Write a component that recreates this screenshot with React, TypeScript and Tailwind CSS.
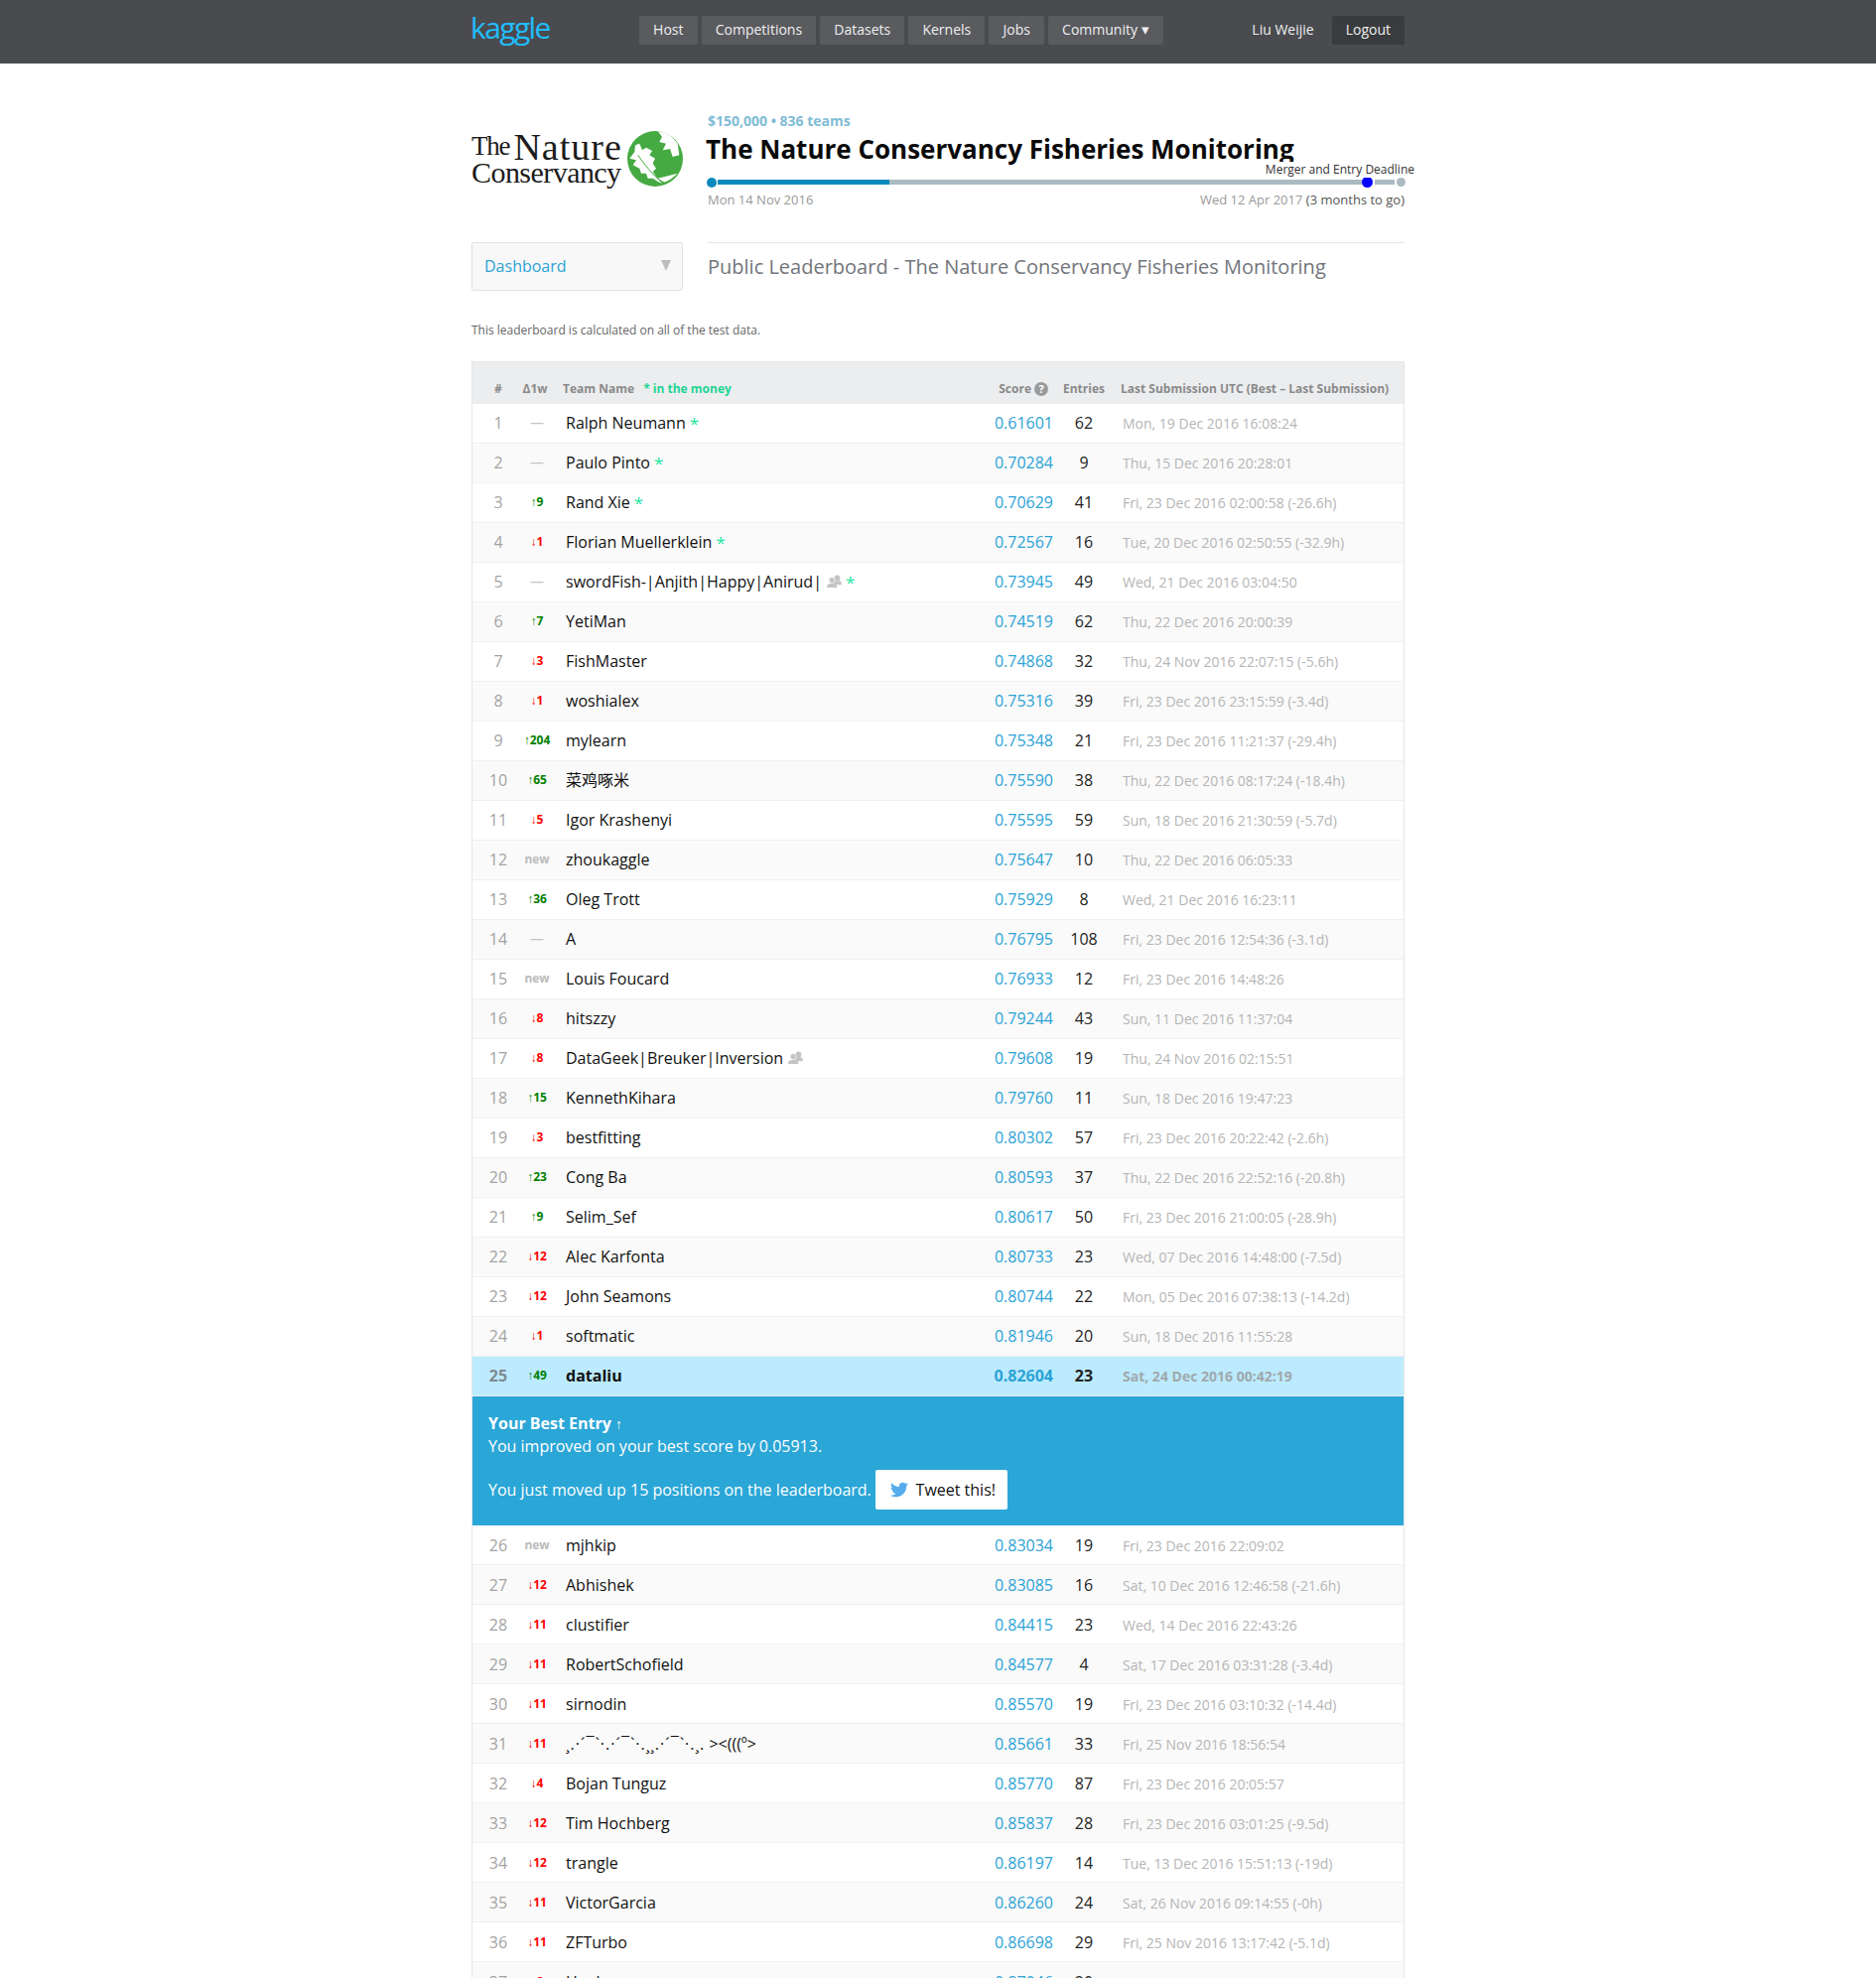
import React from "react";
import { FaTwitter } from "react-icons/fa";

type Row = [number, number | "new" | "-", string, string, number, string, number?];

const WAVE = "¸.·´¯`·.·´¯`·.¸¸.·´¯`·.¸.";

const rows: Row[] = [
  [1, "-", "Ralph Neumann", "0.61601", 62, "Mon, 19 Dec 2016 16:08:24", 1],
  [2, "-", "Paulo Pinto", "0.70284", 9, "Thu, 15 Dec 2016 20:28:01", 1],
  [3, 9, "Rand Xie", "0.70629", 41, "Fri, 23 Dec 2016 02:00:58 (-26.6h)", 1],
  [4, -1, "Florian Muellerklein", "0.72567", 16, "Tue, 20 Dec 2016 02:50:55 (-32.9h)", 1],
  [5, "-", "swordFish-|Anjith|Happy|Anirud|", "0.73945", 49, "Wed, 21 Dec 2016 03:04:50", 3],
  [6, 7, "YetiMan", "0.74519", 62, "Thu, 22 Dec 2016 20:00:39"],
  [7, -3, "FishMaster", "0.74868", 32, "Thu, 24 Nov 2016 22:07:15 (-5.6h)"],
  [8, -1, "woshialex", "0.75316", 39, "Fri, 23 Dec 2016 23:15:59 (-3.4d)"],
  [9, 204, "mylearn", "0.75348", 21, "Fri, 23 Dec 2016 11:21:37 (-29.4h)"],
  [10, 65, "菜鸡啄米", "0.75590", 38, "Thu, 22 Dec 2016 08:17:24 (-18.4h)"],
  [11, -5, "Igor Krashenyi", "0.75595", 59, "Sun, 18 Dec 2016 21:30:59 (-5.7d)"],
  [12, "new", "zhoukaggle", "0.75647", 10, "Thu, 22 Dec 2016 06:05:33"],
  [13, 36, "Oleg Trott", "0.75929", 8, "Wed, 21 Dec 2016 16:23:11"],
  [14, "-", "A", "0.76795", 108, "Fri, 23 Dec 2016 12:54:36 (-3.1d)"],
  [15, "new", "Louis Foucard", "0.76933", 12, "Fri, 23 Dec 2016 14:48:26"],
  [16, -8, "hitszzy", "0.79244", 43, "Sun, 11 Dec 2016 11:37:04"],
  [17, -8, "DataGeek|Breuker|Inversion", "0.79608", 19, "Thu, 24 Nov 2016 02:15:51", 2],
  [18, 15, "KennethKihara", "0.79760", 11, "Sun, 18 Dec 2016 19:47:23"],
  [19, -3, "bestfitting", "0.80302", 57, "Fri, 23 Dec 2016 20:22:42 (-2.6h)"],
  [20, 23, "Cong Ba", "0.80593", 37, "Thu, 22 Dec 2016 22:52:16 (-20.8h)"],
  [21, 9, "Selim_Sef", "0.80617", 50, "Fri, 23 Dec 2016 21:00:05 (-28.9h)"],
  [22, -12, "Alec Karfonta", "0.80733", 23, "Wed, 07 Dec 2016 14:48:00 (-7.5d)"],
  [23, -12, "John Seamons", "0.80744", 22, "Mon, 05 Dec 2016 07:38:13 (-14.2d)"],
  [24, -1, "softmatic", "0.81946", 20, "Sun, 18 Dec 2016 11:55:28"],
  [25, 49, "dataliu", "0.82604", 23, "Sat, 24 Dec 2016 00:42:19"],
  [26, "new", "mjhkip", "0.83034", 19, "Fri, 23 Dec 2016 22:09:02"],
  [27, -12, "Abhishek", "0.83085", 16, "Sat, 10 Dec 2016 12:46:58 (-21.6h)"],
  [28, -11, "clustifier", "0.84415", 23, "Wed, 14 Dec 2016 22:43:26"],
  [29, -11, "RobertSchofield", "0.84577", 4, "Sat, 17 Dec 2016 03:31:28 (-3.4d)"],
  [30, -11, "sirnodin", "0.85570", 19, "Fri, 23 Dec 2016 03:10:32 (-14.4d)"],
  [31, -11, WAVE, "0.85661", 33, "Fri, 25 Nov 2016 18:56:54"],
  [32, -4, "Bojan Tunguz", "0.85770", 87, "Fri, 23 Dec 2016 20:05:57"],
  [33, -12, "Tim Hochberg", "0.85837", 28, "Fri, 23 Dec 2016 03:01:25 (-9.5d)"],
  [34, -12, "trangle", "0.86197", 14, "Tue, 13 Dec 2016 15:51:13 (-19d)"],
  [35, -11, "VictorGarcia", "0.86260", 24, "Sat, 26 Nov 2016 09:14:55 (-0h)"],
  [36, -11, "ZFTurbo", "0.86698", 29, "Fri, 25 Nov 2016 13:17:42 (-5.1d)"],
  [37, -2, "Hank", "0.87046", 20, "Fri, 23 Dec 2016 10:41:17"],
];

function TeamIcon() {
  return (
    <svg width="15" height="14" viewBox="0 0 15 14" className="inline-block ml-[5px] -mt-[3px] align-middle" fill="#c4c4c4">
      <circle cx="10.5" cy="3.4" r="2.9" />
      <path d="M6.5 8.5c0-1.600 1.600-2.400 4-2.400s4.300.8 4.300 2.400v1.700H9z" />
      <circle cx="5.2" cy="5.6" r="3" fill="#c4c4c4" stroke="#fff" strokeWidth="0.6" />
      <path d="M0 13c0-3 1.600-4.300 5.200-4.300S10.500 10 10.500 13z" />
    </svg>
  );
}

function Delta({ v }: { v: Row[1] }) {
  if (v === "-") return <span className="text-[#c4c4c4] text-[14px]">—</span>;
  if (v === "new") return <span className="text-[#bbbbbb] font-bold text-[12px]">new</span>;
  const up = (v as number) > 0;
  return (
    <span className={up ? "text-[#008000] font-bold text-[12px]" : "text-[#ff0000] font-bold text-[12px]"}>
      <span className="font-normal text-[12px] font-['Liberation_Sans',sans-serif]">{up ? "↑" : "↓"}</span>
      {Math.abs(v as number)}
    </span>
  );
}

function TableRow({ r, i }: { r: Row; i: number }) {
  const me = r[0] === 25;
  const after = r[0] > 25;
  const bg = me ? "bg-[#bcebff]" : i % 2 === 0 ? "bg-white" : "bg-[#fafafa]";
  return (
    <div className={`flex items-center h-[40px] border-b border-[#f0f0f0] ${after ? "pt-[1px]" : "pb-[1px]"} ${bg} ${me ? "font-bold" : ""}`}>
      <div className="w-[52px] text-center text-[16px] text-[#a3a3a3]">{me ? <span className="text-[#808a90]">{r[0]}</span> : r[0]}</div>
      <div className="w-[26px] flex justify-center whitespace-nowrap leading-none">
        <Delta v={r[1]} />
      </div>
      <div className="flex-1 pl-[16px] text-[16px] text-[#111111] whitespace-nowrap">
        {r[2] === WAVE ? (
          <>
            <span className="tracking-[1px]">{WAVE}</span> {"><(((º>"}
          </>
        ) : (
          r[2]
        )}
        {r[6] === 2 || r[6] === 3 ? <TeamIcon /> : null}
        {r[6] === 1 || r[6] === 3 ? <span className="text-[#19e59d] ml-[4px] text-[17px] leading-none align-[-1px]">*</span> : null}
      </div>
      <div className="w-[121px] text-right text-[16px] text-[#2ba3d6]">{r[3]}</div>
      <div className="w-[62px] text-center text-[16px] text-[#222222]">{r[4]}</div>
      <div className={`w-[291px] pl-[8px] text-[14px] whitespace-nowrap ${after ? "" : "pt-[1px]"} ${me ? "text-[#a0a8ac]" : "text-[#b5b5b5]"}`}>{r[5]}</div>
    </div>
  );
}

function Globe() {
  return (
    <svg width="56" height="56" viewBox="0 0 56 56" className="shrink-0">
      <defs>
        <clipPath id="globe-clip">
          <circle cx="28" cy="28" r="28" />
        </clipPath>
      </defs>
      <circle cx="28" cy="28" r="28" fill="#46aa42" />
      <g clipPath="url(#globe-clip)" fill="#fff">
        <path d="M8 14.300L12.300 12.700 15 19.300 19 16.700 25 20 22.300 24.300 28 27.700 25.700 32.700 29 37.700 25.700 41 29 46 35 52.700 30.700 51 25.700 47.700 20.700 47.700 19 42.700 14 42.700 12.300 37.700 5.700 34.300 9 29.300 2.300 27.700 7.300 21z" />
        <path d="M30.700 0L40.700 .7 50.700 12.700 52.300 24.300 45.700 26 43 18 35.700 19.300 39 12.700 32.300 11 35 6z" />
        <path d="M30.700 47.700L50.700 42.700C46 47 42 50 37.300 51.500z" />
      </g>
      <path fill="none" stroke="#46aa42" strokeWidth="1" d="M10.700 24.300C17 33 25 44 34 51" />
    </svg>
  );
}

export default function App() {
  return (
    <div className="h-[1993px] overflow-hidden bg-white font-['Open_Sans','Noto_Sans_CJK_SC',sans-serif]">
      <header className="h-[64px] bg-[#4a4b4f]">
        <div className="w-[940px] mx-auto flex items-start h-full">
          <div className="w-[169px] h-[64px] flex items-center text-[30px] font-medium leading-none text-[#20beff] tracking-[-1.6px] -mt-[4px] -ml-[1px] mr-[1px]">kaggle</div>
          <nav className="flex gap-[4px] mt-[16px] text-[14px] text-[#f0f0f0]">
            {["Host", "Competitions", "Datasets", "Kernels", "Jobs"].map((t) => (
              <div key={t} className="h-[29px] leading-[28px] px-[14.12px] bg-[#5a5b5f] rounded-[2px] whitespace-nowrap">{t}</div>
            ))}
            <div className="h-[29px] leading-[28px] px-[14.12px] bg-[#5a5b5f] rounded-[2px] whitespace-nowrap">
              Community <span className="text-[15px] leading-none">▾</span>
            </div>
          </nav>
          <div className="ml-auto flex items-start mt-[16px] text-[14px] leading-[28px] text-[#f0f0f0]">
            <span className="mr-[18px]">Liu Weijie</span>
            <div className="h-[29px] px-[14px] bg-[#3a3b3f] rounded-[2px]">Logout</div>
          </div>
        </div>
      </header>

      <main className="w-[940px] mx-auto">
        <section className="flex pt-[48px]">
          <div className="w-[238px] pt-[20px] flex items-start gap-[5px]">
            <div className="w-[152px] text-[#1c1c1c] font-['Liberation_Serif',serif] whitespace-nowrap pt-[1px]">
              <div className="flex items-baseline h-[31px] leading-[31px]">
                <span className="text-[27px] tracking-[-1.2px] -translate-y-[5px]">The</span>
                <span className="text-[38px] tracking-[1px] ml-[4px]">Nature</span>
              </div>
              <div className="text-[30px] leading-[20px] tracking-[-0.55px]">Conservancy</div>
            </div>
            <Globe />
          </div>
          <div className="w-[702px]">
            <div className="h-[20px] leading-[20px] text-[14px] font-bold text-[#7fbcd6]">$150,000 • 836 teams</div>
            <div className="h-[30px] leading-[36px] text-[26px] font-bold text-[#0a0a0a] -ml-[2px] whitespace-nowrap">The Nature Conservancy Fisheries Monitoring</div>
            <div className="relative flex items-center h-[11px] mt-[16px] -mr-[1px] -ml-[1px]">
              <span className="w-[10px] h-[10px] rounded-full bg-[#0a8abc] shrink-0" />
              <span className="w-[173px] h-[5px] ml-[1px] bg-[#0a8abc] shrink-0" />
              <span className="flex-1 h-[5px] bg-[#aabbc2]" />
              <span className="w-[11px] h-[11px] rounded-full bg-[#0000ff] shrink-0" />
              <span className="w-[20px] h-[5px] mx-[2px] bg-[#aabbc2] shrink-0" />
              <span className="w-[9px] h-[9px] rounded-full bg-[#aabbc2] shrink-0" />
              <span className="absolute -right-[9px] -top-[15px] bg-white text-[12px] leading-[16px] text-[#333333] whitespace-nowrap">Merger and Entry Deadline</span>
            </div>
            <div className="flex justify-between mt-[3px] h-[18px] leading-[18px] text-[13px] text-[#999999]">
              <span>Mon 14 Nov 2016</span>
              <span>Wed 12 Apr 2017 <span className="text-[#555555]">(3 months to go)</span></span>
            </div>
          </div>
        </section>

        <section className="flex mt-[34px]">
          <div className="w-[213px] h-[49px] border border-[#e2e2e2] rounded-[2px] bg-[#f8f8f8] flex items-center justify-between pl-[12px] pr-[11px] pb-[2px] text-[16px] text-[#2ba3d6]">
            Dashboard
            <svg width="10" height="11" viewBox="0 0 10 11"><path d="M0 0h10L5 11z" fill="#bdbdbd" /></svg>
          </div>
          <div className="w-[702px] ml-[25px] border-t border-[#e5e5e5] pt-[10px] text-[20px] leading-[28px] text-[#72757b]">
            Public Leaderboard - The Nature Conservancy Fisheries Monitoring
          </div>
        </section>

        <p className="mt-[31px] text-[12px] leading-[18px] text-[#666666]">This leaderboard is calculated on all of the test data.</p>

        <section className="mt-[22px] border-x border-[#e6e6e6]">
          <div className="flex items-end h-[43px] bg-[#ecedef] border-t border-[#e6e6e6] pb-[6px] text-[12px] leading-[18px] font-bold text-[#8a8a8a]">
            <div className="w-[52px] text-center">#</div>
            <div className="w-[26px] text-center whitespace-nowrap -translate-x-[2px]">Δ1w</div>
            <div className="flex-1 pl-[13px] whitespace-nowrap">
              Team Name <span className="text-[#1dd593] ml-[6px]">* in the money</span>
            </div>
            <div className="w-[121px] flex justify-end items-center gap-[3px] pr-[5px]">
              Score
              <span className="w-[14px] h-[14px] rounded-full bg-[#9a9a9a] text-white text-[11px] leading-[14px] text-center">?</span>
            </div>
            <div className="w-[62px] text-center">Entries</div>
            <div className="w-[291px] pl-[6px] whitespace-nowrap">Last Submission UTC (Best – Last Submission)</div>
          </div>
          {rows.slice(0, 25).map((r, i) => (
            <TableRow key={r[0]} r={r} i={i} />
          ))}
          <div className="h-[130px] bg-[#2aa6d7] px-[16px] pt-[15px] text-[16px] text-white">
            <div className="font-bold leading-[24px]">Your Best Entry <span className="font-normal text-[14px] font-['Liberation_Sans',sans-serif]">↑</span></div>
            <div className="leading-[21px]">You improved on your best score by 0.05913.</div>
            <div className="flex items-center mt-[13px]">
              <span>You just moved up 15 positions on the leaderboard.</span>
              <span className="ml-[4px] h-[40px] w-[133px] bg-white rounded-[2px] flex items-center justify-center gap-[8px] pl-[3px] text-[#111111]">
                <FaTwitter className="text-[#55acee] text-[18px]" />
                Tweet this!
              </span>
            </div>
          </div>
          {rows.slice(25).map((r, i) => (
            <TableRow key={r[0]} r={r} i={i} />
          ))}
        </section>
      </main>
    </div>
  );
}
